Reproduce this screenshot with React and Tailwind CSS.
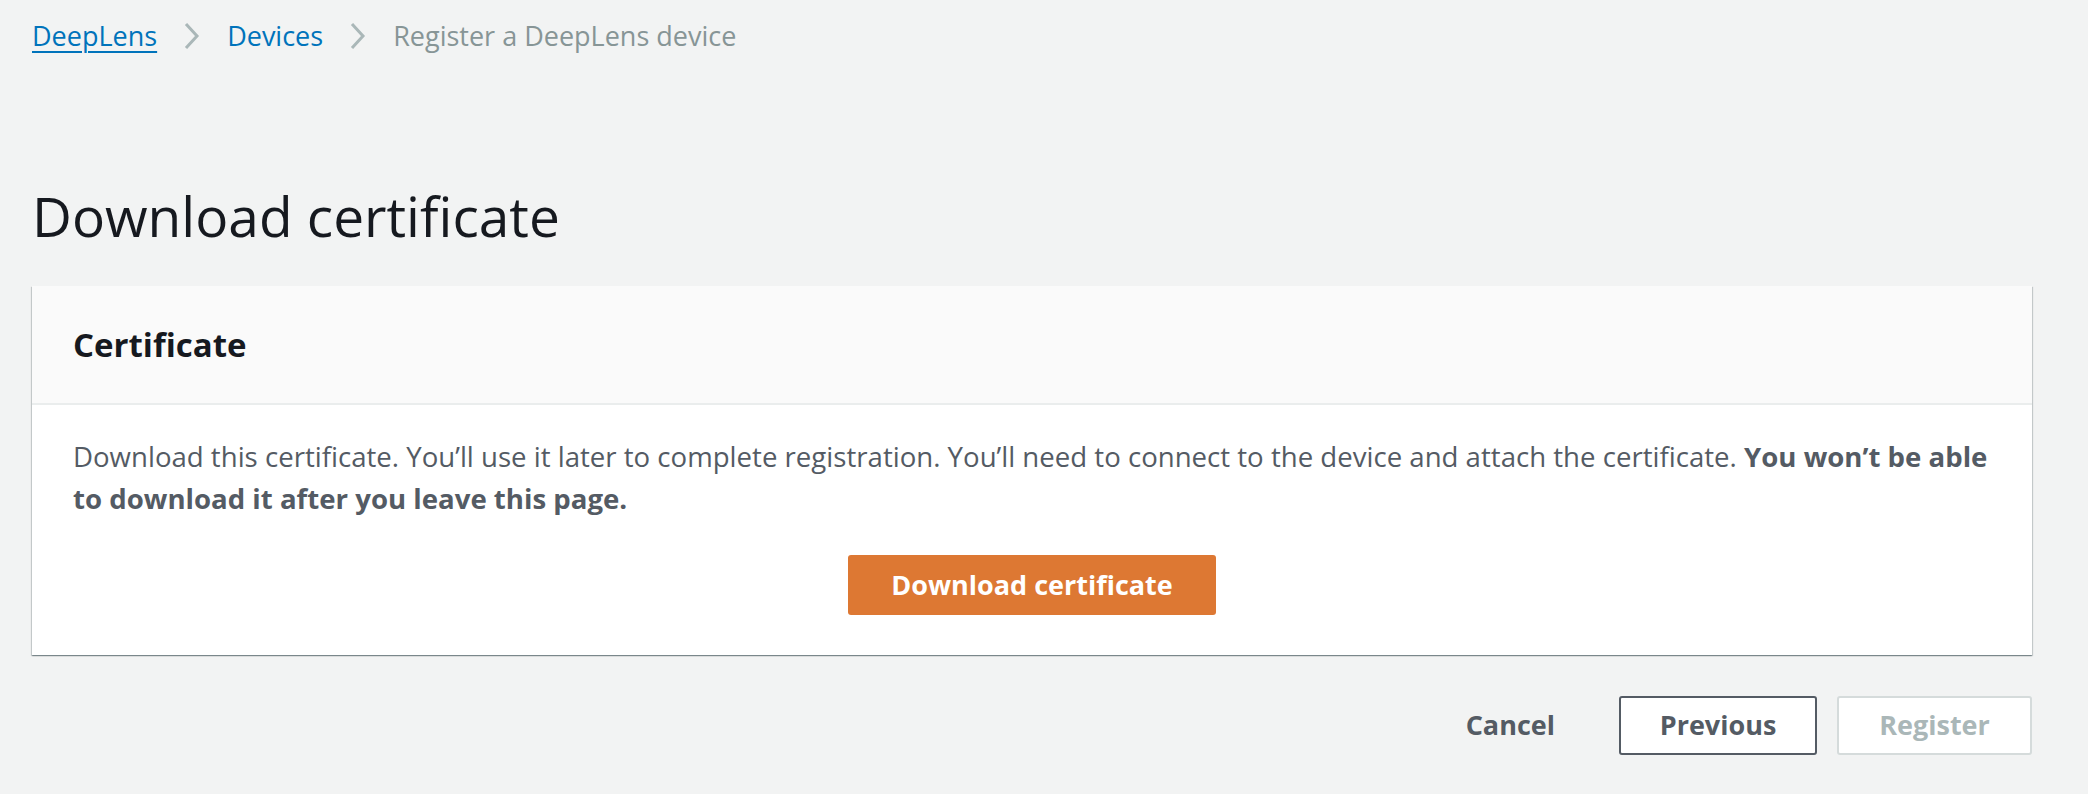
function Chevron() {
  return (
    <svg width="18" height="28" viewBox="0 0 18 28" className="shrink-0">
      <polyline points="3,2 14,14 3,26" fill="none" stroke="#aab7b8" strokeWidth="3" />
    </svg>
  );
}

export default function App() {
  return (
    <div
      className="min-h-[794px] bg-[#f2f3f3] pl-[32px] pr-[56px] pt-[18px]"
      style={{ fontFamily: '"Open Sans", "Liberation Sans", sans-serif' }}
    >
      {/* breadcrumbs */}
      <nav className="flex items-center h-[36px] text-[27px]">
        <a className="text-[#0073bb] underline underline-offset-[5px] decoration-2">DeepLens</a>
        <span className="mx-[26px] flex items-center"><Chevron /></span>
        <a className="text-[#0073bb]">Devices</a>
        <span className="mx-[26px] flex items-center"><Chevron /></span>
        <span className="text-[#879596]">Register a DeepLens device</span>
      </nav>

      <h1 className="mt-[134px] text-[55px] leading-[56px] font-normal text-[#16191f]">Download certificate</h1>

      <section className="mt-[42px] bg-white shadow-[0_1px_1px_0_rgba(0,28,36,0.3),1px_1px_1px_0_rgba(0,28,36,0.15),-1px_1px_1px_0_rgba(0,28,36,0.15)]">
        <div className="h-[119px] flex items-center px-[41px] bg-[#fafafa] border-b-2 border-[#eaeded]">
          <h2 className="text-[33px] font-bold text-[#16191f]">Certificate</h2>
        </div>
        <div className="px-[41px] pt-[30px] pb-[40px]">
          <p className="text-[27.6px] leading-[42px] text-[#545b64]">
            Download this certificate. You’ll use it later to complete registration. You’ll need to connect to the device and attach the certificate.{" "}
            <b className="font-bold">You won’t be able to download it after you leave this page.</b>
          </p>
          <div className="flex justify-center mt-[36px]">
            <button className="w-[368px] h-[60px] rounded-[3px] bg-[#dd7833] text-white text-[27px] font-bold">
              Download certificate
            </button>
          </div>
        </div>
      </section>

      <div className="flex justify-end items-center mt-[41px] gap-[20px]">
        <button className="px-[44px] h-[59px] text-[27px] font-bold text-[#545b64]">Cancel</button>
        <button className="w-[198px] h-[59px] rounded-[3px] border-2 border-[#545b64] bg-white text-[27px] font-bold text-[#545b64]">Previous</button>
        <button className="w-[195px] h-[59px] rounded-[3px] border-2 border-[#d5dbdb] bg-white text-[27px] font-bold text-[#aab7b8]">Register</button>
      </div>
    </div>
  );
}
